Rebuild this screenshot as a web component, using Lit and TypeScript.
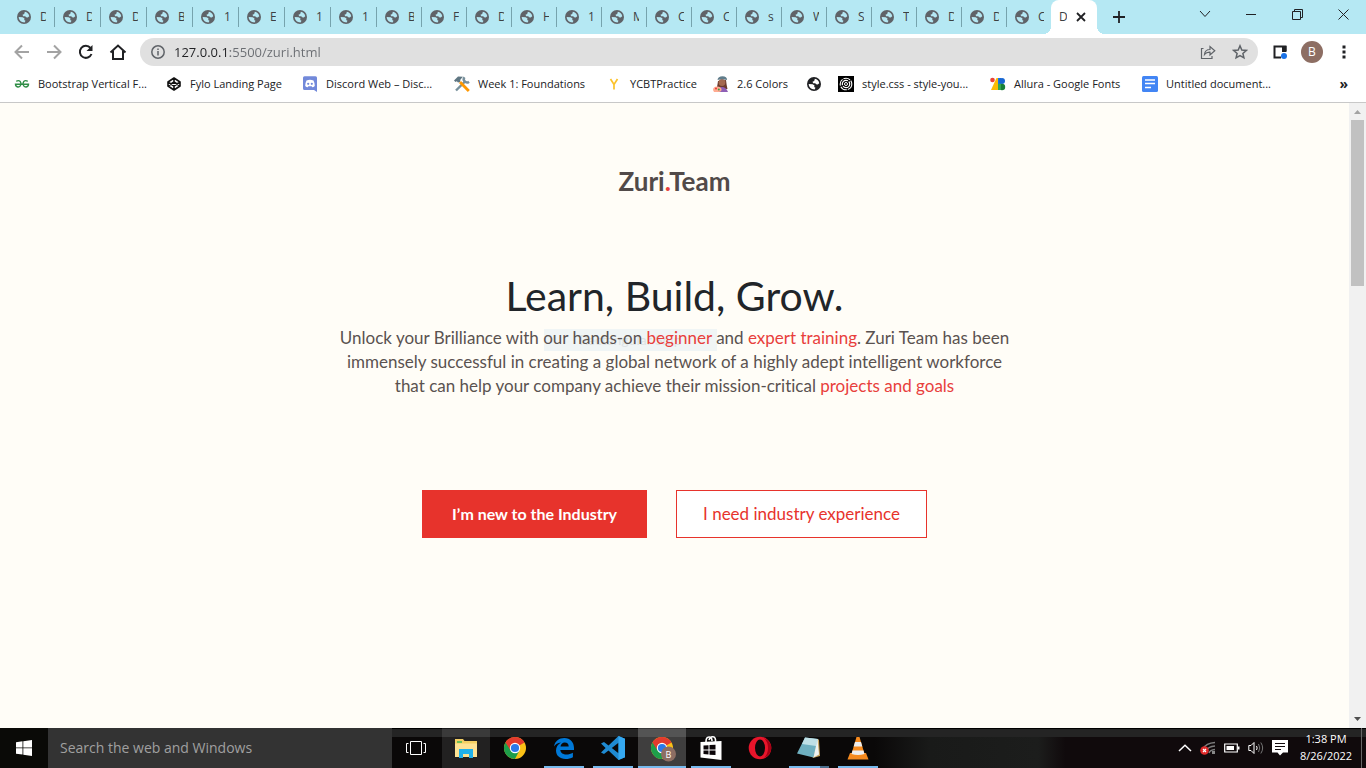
import { LitElement, html, css, svg } from "lit";
import { customElement } from "lit/decorators.js";

const globe = html`<svg class="globe" viewBox="0 0 16 16" aria-hidden="true">
  <circle cx="8" cy="8" r="8" fill="currentColor" />
  <path class="land" d="M9 2C11.500 2.300 13.600 4.500 14 7L12.300 8.600 10.300 8.300 9.500 7 7 7.200 6.300 5.500 8.200 4.500ZM1.900 8 6.500 8.300 8.600 9.800 8.200 11.300 9.700 12.300 8.700 14.200 5.800 13.800C3.500 12.700 1.900 10.500 1.900 8Z" />
</svg>`;

const tabs = ["D", "D", "D", "B", "1", "E", "1", "1", "B", "F", "D", "H", "1", "M", "C", "C", "s", "W", "S", "T", "D", "D", "C"];

const gfg = html`<svg viewBox="0 0 16 16"><g fill="none" stroke="#2f8d46" stroke-width="1.400"><path d="M2.300 5.400Q4.500 3.800 6.300 5.600 7.300 7 6.900 8.600 6 11.300 3.800 11 1.500 10.500 1.500 8.300H14.500Q14.500 10.500 12.200 11 10 11.300 9.100 8.600 8.700 7 9.700 5.600 11.500 3.800 13.700 5.400" /></g></svg>`;
const codepen = html`<svg viewBox="0 0 16 16"><path fill="none" stroke="#111" stroke-width="1.600" stroke-linejoin="round" d="M8 2 14 6V10L8 14 2 10V6ZM8 2V6M8 10V14M2 6 8 10 14 6M2 10 8 6 14 10" /></svg>`;
const discord = html`<svg viewBox="0 0 16 16"><path fill="#7289da" d="M2.500.2h11A1.500 1.500 0 0 1 15 1.700v14.300l-3-2H2.500A1.500 1.500 0 0 1 1 12.500V1.700A1.500 1.500 0 0 1 2.500.2Z" /><path fill="#fff" d="M4.500 4.500Q8 3 11.500 4.500 13 7.500 12.800 10 11.500 11.200 10.200 11.200L9.700 10.300H6.300L5.800 11.200Q4.500 11.200 3.200 10 3 7.500 4.500 4.500Z" /><circle cx="6.200" cy="7.800" r="1.100" fill="#7289da" /><circle cx="9.800" cy="7.800" r="1.100" fill="#7289da" /></svg>`;
const tools = html`<svg viewBox="0 0 16 16"><path d="M2 14.500 11 5.500" stroke="#78909c" stroke-width="2.400" /><path d="M10.500 1.200a3.200 3.200 0 0 0 4.500 4.500" fill="none" stroke="#78909c" stroke-width="2.400" /><path d="M0 4.500 4 .6 9 .8 6.500 3.600 6 6 4 6.500 2.800 5.200 1.500 6Z" fill="#5f7682" /><path d="M6 6 14.800 15" stroke="#ff9800" stroke-width="2.800" /></svg>`;
const letterY = html`<svg viewBox="0 0 16 16"><path d="M4.500 3 8 8.500 11.500 3M8 8V13.500" fill="none" stroke="#fbc22b" stroke-width="1.700" /></svg>`;
const artist = html`<svg viewBox="0 0 16 16"><path d="M5 5Q4 12 3.500 13h11Q13.500 9 13 4Z" fill="#6d3b2d" /><circle cx="9" cy="6.500" r="3.400" fill="#a5694f" /><path d="M4.500 4Q5 .3 9.500 .3T14 4Q9 2.500 4.500 4Z" fill="#607d8b" /><path d="M4 16q1-5 5-5t6 5Z" fill="#8e5fb5" /><path d="M0 14q0-3.500 4-3.500t4.500 2.500-3 3H1Z" fill="#ffab91" /><circle cx="3" cy="12.500" r="1" fill="#e53935" /><circle cx="5.800" cy="13.500" r="1" fill="#43a047" /></svg>`;
const spiral = html`<svg viewBox="0 0 16 16"><path fill="#000" d="M0 0h16v16H0Z" /><g fill="none" stroke="#fff"><circle cx="8" cy="8" r="5.800" stroke-width="1.100" stroke-dasharray="7 1" /><circle cx="8" cy="8" r="3.700" stroke-width="1.200" stroke-dasharray="9 1" /><circle cx="8" cy="8" r="1.500" /></g></svg>`;
const gfonts = html`<svg viewBox="0 0 16 16"><circle cx="2.500" cy="4" r="2.300" fill="#ea4335" /><path d="M6.500 2H10V14H1Z" fill="#fbbc04" /><path d="M8 2h3v12H8Z" fill="#1a73e8" /><circle cx="12" cy="5" r="3" fill="#1967d2" /><circle cx="12" cy="11" r="3.200" fill="#188038" /><path d="M8 7.800h3V14H8Z" fill="#34a853" /></svg>`;
const docs = html`<svg viewBox="0 0 16 16"><rect width="16" height="16" rx="1.500" fill="#4285f4" /><path d="M3 4h10M3 7.500h10M3 11.500h6" stroke="#fff" stroke-width="1.600" /></svg>`;

const bookmarks = [
  { icon: gfg, label: "Bootstrap Vertical F...", size: "long" },
  { icon: codepen, label: "Fylo Landing Page", size: "mid" },
  { icon: discord, label: "Discord Web – Disc...", size: "long" },
  { icon: tools, label: "Week 1: Foundations", size: "long" },
  { icon: letterY, label: "YCBTPractice", size: "short" },
  { icon: artist, label: "2.6 Colors", size: "tiny" },
  { icon: globe, label: "", size: "" },
  { icon: spiral, label: "style.css - style-you...", size: "long" },
  { icon: gfonts, label: "Allura - Google Fonts", size: "long" },
  { icon: docs, label: "Untitled document...", size: "long" },
];

const chromeArt = svg`<circle cx="12" cy="12" r="11" fill="#fbc116" />
  <path d="M12 12 2.470 6.500A11 11 0 0 1 21.530 6.500Z" fill="#e33b2e" />
  <path d="M12 12 2.470 6.500A11 11 0 0 0 12 23Z" fill="#1e9e4a" />
  <path d="M7.600 14.500 2.470 6.500 12 7H21.800Q14 7 12 7Z" fill="#e33b2e" />
  <path d="M16.400 14.500 12 23 7 15Z" fill="#1e9e4a" />
  <circle cx="12" cy="12" r="5.200" fill="#fff" /><circle cx="12" cy="12" r="4.100" fill="#2b79ea" />`;

const apps = [
  { name: "File Explorer", state: "hover", icon: html`<svg viewBox="0 0 24 24"><path d="M1 3h8l1.500 2H23v16H1Z" fill="#f3cf63" /><path d="M3 5h5v2H3Z" fill="#6bbf59" /><path d="M1 7.500h22V21H1Z" fill="#fde293" /><path d="M5 13h14v9h-4v-4H9v4H5Z" fill="#1fb1ea" /></svg>` },
  { name: "Chrome", state: "", icon: html`<svg viewBox="0 0 24 24">${chromeArt}</svg>` },
  { name: "Edge", state: "open", icon: html`<svg viewBox="0 0 24 24"><path fill="#0078d7" d="M2 10.500C3 5 7 2 12.300 2 18.500 2 22 6.500 22 12v2H8.300c.3 3 3 4.500 6 4.500 2.500 0 4.600-.7 6.600-1.800v4.500C19 22.300 16.400 23 13.500 23 7.800 23 4 19.700 4 14.600c0-3.600 2-6.400 5-8C5.800 7 3.600 8.500 2 10.500ZM8.500 10.500h8.200c0-2.500-1.400-4-3.900-4S8.800 8.300 8.500 10.500Z" /></svg>` },
  { name: "Visual Studio Code", state: "open", icon: html`<svg viewBox="0 0 24 24"><path d="M17.500 0 24 2.700V21.300L17.500 24 7.500 14.600 3 18 0 16.400 4.600 12 0 7.600 3 6 7.500 9.400ZM17.500 6.800 10.800 12l6.700 5.200Z" fill="#1f8ad2" /><path d="M17.500 0 24 2.700V21.300L17.500 24Z" fill="#35a8f0" /></svg>` },
  { name: "Chrome, profile B", state: "active", icon: html`<svg viewBox="0 0 24 24">${chromeArt}<circle cx="18.500" cy="18" r="7.500" fill="#8d6e63" /><text x="18.500" y="21.500" text-anchor="middle" font-size="9" fill="#fff">B</text></svg>` },
  { name: "Store", state: "open", icon: html`<svg viewBox="0 0 24 24"><path d="M7 6Q7 1 10 1t3 4M10 4Q11 .5 14 .8T16.500 6" fill="none" stroke="#fff" stroke-width="1.600" /><path d="M1.500 6 22.500 5V24L1.500 21.500Z" fill="#fff" /><path d="M4.500 9.500 9.500 9.200V13.500H4.500ZM10.500 9 16.500 8.700V13.500H10.500ZM4.500 14.500H9.500V18.500L4.500 18ZM10.500 14.500h6v4.600L10.500 18.700Z" fill="#0b0508" /></svg>` },
  { name: "Opera", state: "", icon: html`<svg viewBox="0 0 24 24"><circle cx="12" cy="12" r="11.300" fill="#e8152b" /><path d="M16 2Q23 5 23.300 12 23 19 16 22Q20 18 20 12T16 2Z" fill="#a70014" /><ellipse cx="12" cy="12" rx="5" ry="8.500" fill="#0b0a0b" /></svg>` },
  { name: "Notepad", state: "split", icon: html`<svg viewBox="0 0 24 24"><path d="M9 2 22 3.500 23 20 16 22Z" fill="#c9a660" /><path d="M8 1.500 21 3 16.500 21.500 0 17.500Z" fill="#6fb0c0" /><path d="M8 1.500 21 3 19 10 5 8Z" fill="#bfe0e6" /><path d="M20.500 3 22 18.500 16.500 21.500Z" fill="#eef3f2" /></svg>` },
  { name: "VLC", state: "open", icon: html`<svg viewBox="0 0 24 24"><path d="M4 17h16l2.500 6.500h-21Z" fill="#f58a1f" /><path d="M10.500 1h3L19 19.500Q12 22 5 19.500Z" fill="#f78b1e" /><path d="M9 6h6l1.300 4.500H7.700ZM6.500 14.500h11l1 3.500q-6.500 2-13 0Z" fill="#eee" /></svg>` },
];

@customElement("browser-tabs")
class BrowserTabs extends LitElement {
  static styles = css`
    :host { display: flex; height: 34px; padding-left: 9px; background: #b5e8f3; font: 12px/16px "Open Sans", sans-serif; color: #3c4043; }
    button { border: 0; margin: 0; padding: 0; background: none; font: inherit; color: inherit; }
    .tabs { display: flex; flex: 1; min-width: 0; }
    .tab { display: flex; align-items: center; flex: 0 1 45px; height: 20px; margin-top: 7px; padding-left: 8px; border-right: 1px solid #76a3ad; box-sizing: border-box; overflow: hidden; min-width: 0; }
    .tab:nth-child(-n + 8) { flex-basis: 46px; }
    .tab:nth-child(23) { flex-basis: 44px; border-color: transparent; }
    .globe { flex: none; width: 14px; height: 14px; color: #5f6368; margin-right: 9px; }
    .land { fill: #b5e8f3; }
    .title { width: 6px; overflow: hidden; white-space: nowrap; text-align: left; }
    .active { position: relative; display: flex; align-items: center; gap: 5px; flex: none; width: 46px; height: 34px; padding-left: 8px; box-sizing: border-box; background: #fff; border-radius: 8px 8px 0 0; }
    .active::before, .active::after { content: ""; position: absolute; bottom: 0; width: 8px; height: 8px; }
    .active::before { left: -8px; background: radial-gradient(circle at 0 0, transparent 8px, #fff 8px); }
    .active::after { right: -8px; background: radial-gradient(circle at 100% 0, transparent 8px, #fff 8px); }
    .active .title { width: 8px; }
    .close { display: flex; width: 18px; height: 18px; align-items: center; justify-content: center; }
    .new { width: 44px; display: flex; align-items: center; justify-content: center; }
    .win { display: flex; height: 28px; }
    .win button { width: 46px; display: flex; align-items: center; justify-content: center; }
    svg { display: block; fill: none; stroke: #202124; }
    .globe { stroke: none; }
  `;
  render() {
    return html`
      <div class="tabs" role="tablist">
        ${tabs.map((t) => html`<button class="tab" role="tab">${globe}<span class="title">${t}</span></button>`)}
        <div class="active" role="tab" aria-selected="true"><span class="title">D</span><button class="close" aria-label="Close tab"><svg width="10" height="10"><path d="M1 1 9 9M9 1 1 9" stroke-width="1.800" /></svg></button></div>
        <button class="new" aria-label="New tab"><svg width="12" height="12"><path d="M6 0V12M0 6H12" stroke-width="1.800" /></svg></button>
      </div>
      <div class="win">
        <button aria-label="Search tabs"><svg width="12" height="8"><path d="M1 1 6 6.500 11 1" /></svg></button>
        <button aria-label="Minimize"><svg width="10" height="10"><path d="M0 5.500H10" /></svg></button>
        <button aria-label="Restore"><svg width="11" height="11"><path d="M.5 2.500H8.500V10.500H.5ZM2.500 2.500V.5H10.500V8.500H8.500" /></svg></button>
        <button aria-label="Close"><svg width="11" height="11"><path d="M.5.5 10.500 10.500M10.500.5.5 10.500" /></svg></button>
      </div>`;
  }
}

@customElement("browser-toolbar")
class BrowserToolbar extends LitElement {
  static styles = css`
    :host { display: flex; align-items: center; height: 36px; padding: 0 6px; background: #fff; font: 13px/20px "Open Sans", sans-serif; }
    button { border: 0; margin: 0; padding: 0; background: none; display: flex; align-items: center; justify-content: center; width: 32px; height: 28px; }
    svg { display: block; fill: none; stroke: #202124; stroke-width: 2; }
    .dim svg { stroke: #a3a3a3; }
    .omni { display: flex; align-items: center; flex: 1; min-width: 0; height: 28px; margin: 0 6px; padding: 0 2px; background: #e0e0e0; border-radius: 14px; }
    .omni svg { stroke: #5f6368; stroke-width: 1.500; }
    .url { flex: 1; min-width: 0; border: 0; outline: 0; padding: 0; font: inherit; color: transparent; background: linear-gradient(90deg, #202124 56px, #6a6d72 56px); -webkit-background-clip: text; background-clip: text; }
    .avatar { width: 22px; height: 22px; border-radius: 50%; background: #8d6e63; color: #fff; font: 12px/22px "Open Sans", sans-serif; margin: 0 5px; }
  `;
  render() {
    return html`
      <button class="dim" aria-label="Back"><svg width="16" height="16"><path d="M15 8H2M8 1.500 1.500 8 8 14.500" /></svg></button>
      <button class="dim" aria-label="Forward"><svg width="16" height="16"><path d="M1 8H14M8 1.500 14.500 8 8 14.500" /></svg></button>
      <button aria-label="Reload"><svg width="16" height="16"><path d="M13.500 10A6 6 0 1 1 12.500 4" /><path d="M14.500 1V7H8.500Z" fill="#202124" stroke="none" /></svg></button>
      <button aria-label="Home"><svg width="18" height="18"><path d="M1.500 9.500 9 2.500 16.500 9.500M4 8V16H14V8" /></svg></button>
      <div class="omni">
        <button aria-label="Site information"><svg width="14" height="14"><circle cx="7" cy="7" r="6.200" /><path d="M7 6V10.500M7 3.500V5" /></svg></button>
        <input class="url" aria-label="Address" value="127.0.0.1:5500/zuri.html" />
        <button aria-label="Share"><svg width="16" height="16"><path d="M3.500 4.500H1.500V14.500H12V12M4.500 10.500Q5 5.500 10 5.500V2.500L14.800 6.800 10 11V8.200Q6.500 8 4.500 10.500Z" stroke-width="1.200" /></svg></button>
        <button aria-label="Bookmark this page"><svg width="16" height="16"><path d="M8 1.800 9.800 6 14.300 6.400 10.900 9.400 11.900 13.800 8 11.500 4.100 13.800 5.100 9.400 1.700 6.400 6.200 6Z" /></svg></button>
      </div>
      <button aria-label="Side panel"><svg width="16" height="16"><path d="M9 13.500H2.500V2.500H13.500V7" stroke-width="2" /><path d="M10 2h4.500v6H10Z" fill="#202124" stroke="none" /><circle cx="12" cy="12" r="3" fill="#1a73e8" stroke="none" /></svg></button>
      <button class="avatar" aria-label="Profile">B</button>
      <button aria-label="Menu"><svg width="4" height="14" viewBox="0 0 4 14"><path d="M.5 2H3.500M.5 7H3.500M.5 12H3.500" stroke-width="3" /></svg></button>`;
  }
}

@customElement("bookmark-bar")
class BookmarkBar extends LitElement {
  static styles = css`
    :host { display: flex; align-items: center; height: 33px; padding: 0 18px 4px 14px; box-sizing: border-box; background: #fff; border-bottom: 1px solid #c8c8c8; font: 11px/16px "Open Sans", sans-serif; }
    nav { display: flex; flex: 1; gap: 16px; min-width: 0; }
    a { display: flex; align-items: center; gap: 8px; flex: none; color: #202124; text-decoration: none; white-space: nowrap; }
    svg { width: 16px; height: 16px; flex: none; display: block; }
    .globe { width: 14px; height: 14px; margin: 0 1px; }
    .land { fill: #fff; }
    .long { width: 112px; }
    .mid { width: 96px; }
    .short { width: 67px; }
    .tiny { width: 53px; }
    button { border: 0; padding: 0; background: none; font: 700 14px/16px "Open Sans", sans-serif; color: #202124; }
  `;
  render() {
    return html`<nav>${bookmarks.map((b) => html`<a href="#" aria-label=${b.label || "Bookmark"}>${b.icon}${b.label ? html`<span class=${b.size}>${b.label}</span>` : ""}</a>`)}</nav>
      <button aria-label="More bookmarks">»</button>`;
  }
}

@customElement("zuri-page")
class ZuriPage extends LitElement {
  static styles = css`
    :host { display: flex; min-height: 0; background: #fffdf7; font: 17px/24px Lato, sans-serif; font-variant-ligatures: none; color: #5a5250; }
    main { flex: 1; display: flex; flex-direction: column; align-items: center; text-align: center; padding-top: 60px; }
    .logo { font-size: 26px; line-height: 36px; font-weight: 700; color: #514a49; }
    .dot, .copy a { color: #e8403c; text-decoration: none; }
    h1 { margin: 73px 0 6px; font-size: 41px; line-height: 48px; font-weight: 400; color: #212529; }
    .copy { position: relative; margin: 0; isolation: isolate; }
    .line { display: block; }
    .ghost { position: absolute; z-index: -1; left: 204px; top: 3px; width: 173px; height: 22px; background: #f0f5f5; color: #dde3e4; font-size: 14px; line-height: 22px; }
    .actions { display: flex; gap: 29px; margin-top: 92px; }
    .actions button { height: 48px; border: 1px solid #e7332c; padding: 0 26px; font: inherit; }
    .actions .primary { padding: 0 29px; background: #e7332c; color: #fff; font-size: 16px; font-weight: 700; }
    .secondary { background: #fff; color: #e7332c; }
    .scroll { display: flex; flex-direction: column; align-items: center; width: 17px; background: #f1f1f1; }
    .thumb { width: 13px; height: 166px; background: #c1c1c1; }
    .scroll svg { display: block; width: 17px; height: 17px; }
    .track { flex: 1; display: flex; }
  `;
  render() {
    return html`<main>
        <div class="logo">Zuri<span class="dot">.</span>Team</div>
        <h1>Learn, Build, Grow.</h1>
        <p class="copy">
          <span class="line">Unlock your Brilliance with our hands-on <a href="#">beginner</a> and <a href="#">expert training</a>. Zuri Team has been</span>
          <span class="line">immensely successful in creating a global network of a highly adept intelligent workforce</span>
          <span class="line">that can help your company achieve their mission-critical <a href="#">projects and goals</a></span>
          <span class="ghost">Rectangular Snip</span>
        </p>
        <div class="actions"><button class="primary">I’m new to the Industry</button><button class="secondary">I need industry experience</button></div>
      </main>
      <div class="scroll"><svg><path d="M5 11H12L8.500 7Z" fill="#a3a3a3" /></svg><div class="track"><div class="thumb"></div></div><svg><path d="M5 6H12L8.500 10Z" fill="#505050" /></svg></div>`;
  }
}

@customElement("task-bar")
class TaskBar extends LitElement {
  static styles = css`
    :host { display: flex; height: 40px; background: linear-gradient(#000 1px, #242424 1px, #242424 9px, transparent 9px), linear-gradient(90deg, #0a0808 64%, #191a19 68%, #1c1d1c 76%, #100a0c 78%, #100a0c); font: 11px/17px "Open Sans", sans-serif; color: #fff; }
    button { border: 0; margin: 0; padding: 0; background: none; color: inherit; font: inherit; display: flex; align-items: center; justify-content: center; }
    svg { display: block; }
    .start { width: 48px; background: #0a0a07; }
    .search { width: 344px; box-sizing: border-box; border: 0; outline: 0; padding: 0 12px; background: #333; color: #fff; font: 14px/20px "Open Sans", sans-serif; border-radius: 0; }
    .search::placeholder { color: #a0a0a0; opacity: 1; }
    .view { width: 48px; margin-right: 2px; }
    .apps { display: flex; flex: 1; gap: 1px; }
    .app { width: 48px; }
    .app svg { width: 24px; height: 24px; overflow: visible; }
    .hover { background: rgba(255, 255, 255, 0.1); }
    .active { background: linear-gradient(transparent 38px, #76b9ed 38px), rgba(255, 255, 255, 0.22); }
    .open { background: linear-gradient(#76b9ed, #76b9ed) 50% 100% / 40px 2px no-repeat; }
    .split { background: linear-gradient(90deg, #76b9ed 31px, #4b6f8e 31px) 50% 100% / 40px 2px no-repeat; }
    .tray { display: flex; align-items: center; gap: 8px; }
    .clock { display: flex; flex-direction: column; width: 62px; height: 40px; padding: 2px 9px 4px 0; box-sizing: border-box; text-align: center; margin: 0 4px; border-right: 1px solid #666; }
    text { font-family: "Open Sans", sans-serif; }
  `;
  render() {
    return html`
      <button class="start" aria-label="Start"><svg width="16" height="16"><path fill="#fff" d="M0 2.200 6.500 1.300V7.500H0ZM7.300 1.200 16 0V7.500H7.300ZM0 8.300H6.500V14.600L0 13.700ZM7.300 8.300H16V16L7.300 14.800Z" /></svg></button>
      <input class="search" aria-label="Search" placeholder="Search the web and Windows" />
      <button class="view" aria-label="Task view"><svg width="20" height="14" fill="none" stroke="#fff"><path d="M4.500.5H15.500V13.500H4.500ZM2.500 2.500H.5V11.500H2.500M17.500 2.500H19.500V11.500H17.500" /></svg></button>
      <div class="apps">${apps.map((a) => html`<button class="app ${a.state}" aria-label=${a.name}>${a.icon}</button>`)}</div>
      <div class="tray">
        <button aria-label="Hidden icons"><svg width="14" height="8" fill="none" stroke="#fff" stroke-width="1.500"><path d="M1 7 7 1.200 13 7" /></svg></button>
        <button aria-label="Network"><svg width="16" height="16"><g fill="none" stroke="#7d7d7d" stroke-width="1.500"><path d="M3 9Q6 3 15 2.500M6 11Q8 6.500 15 6M9 13Q10 10 15 9.500" /></g><rect x="12" y="11" width="3" height="3" fill="#888" /><circle cx="4.500" cy="10.500" r="4.300" fill="#e02b2b" /><path d="M3 9 6 12M6 9 3 12" stroke="#fff" stroke-width="1.200" /></svg></button>
        <button aria-label="Battery"><svg width="16" height="10"><path d="M.7 1H13.300V9H.7Z" fill="none" stroke="#fff" stroke-width="1.200" /><path d="M2.500 3H10V7H2.500ZM14 3.500H15.500V6.500H14Z" fill="#fff" /></svg></button>
        <button aria-label="Volume"><svg width="16" height="14" fill="none" stroke="#fff"><path d="M.8 4.500H3L6 1.500V12.500L3 9.500H.8ZM8.500 5Q9.800 7 8.500 9" /><path d="M10.500 3Q13 7 10.500 11M12.800 1.500Q16.500 7 12.800 12.500" stroke="#777" /></svg></button>
        <button aria-label="Notifications"><svg width="16" height="16"><path d="M0 0H16V12.500H11L8 15.500 5.500 12.500H0Z" fill="#fff" /><path d="M3 3.500H13M3 6.500H13M3 9.500H9" stroke="#120a0c" /></svg></button>
        <div class="clock"><span>1:38 PM</span><span>8/26/2022</span></div>
      </div>`;
  }
}

@customElement("app-root")
class AppRoot extends LitElement {
  static styles = css`
    :host { display: flex; flex-direction: column; height: 100vh; }
    zuri-page { flex: 1; }
  `;
  render() {
    return html`<browser-tabs></browser-tabs><browser-toolbar></browser-toolbar><bookmark-bar></bookmark-bar><zuri-page></zuri-page><task-bar></task-bar>`;
  }
}
